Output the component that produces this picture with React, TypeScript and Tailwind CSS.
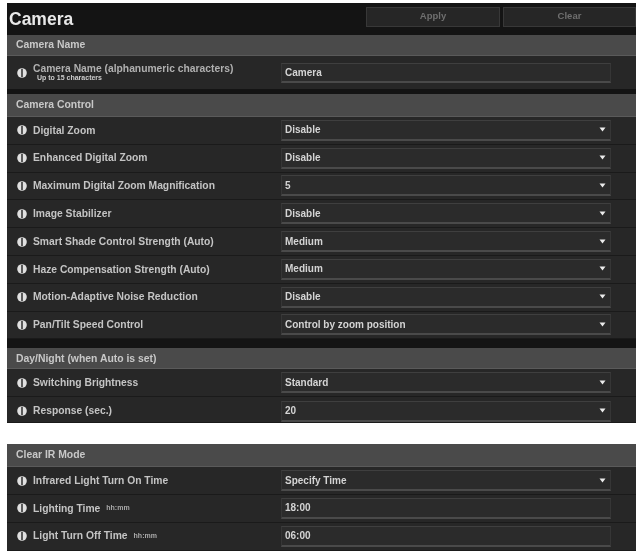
import React from "react";

function Info() {
  return (
    <svg width="10" height="10" viewBox="0 0 10 10" className="shrink-0">
      <circle cx="5" cy="5" r="4.8" fill="#e0e0e0" />
      <rect x="4.3" y="1" width="1.4" height="8" fill="#222" />
    </svg>
  );
}

function Section({ title, className = "" }: { title: string; className?: string }) {
  return (
    <div className={"flex h-[21px] items-center border-b border-[#5a5a5a] bg-[#4a4a4a] pl-[9px] text-[10.4px] font-bold text-[#c8c8c8] " + className}>
      {title}
    </div>
  );
}

function Row({
  label,
  note,
  value,
  select,
  h = "h-[27.8px]",
}: {
  label: string;
  note?: string;
  value: string;
  select?: boolean;
  h?: string;
}) {
  return (
    <div className={"flex items-center border-b border-[#1a1a1a] bg-[#272727] " + h}>
      <div className="flex w-[274px] shrink-0 items-center gap-[6px] pl-[10px]">
        <Info />
        <span className="text-[10.3px] font-bold text-[#c4c4c4]">{label}</span>
        {note && <span className="text-[7px] font-bold text-[#aaa]">{note}</span>}
      </div>
      <div className="flex h-[21px] w-[330px] items-center justify-between border-x border-t border-b-2 border-x-[#363636] border-t-[#3f3f3f] border-b-[#4a4a4a] bg-[#2b2b2b] px-[3px] text-[10px] font-bold text-[#d4d4d4]">
        <span>{value}</span>
        {select && (
          <svg width="7" height="5" viewBox="0 0 7 5" className="mr-[1px]">
            <path d="M0.5 0.5 H6.5 L3.5 4.5 Z" fill="#ececec" />
          </svg>
        )}
      </div>
    </div>
  );
}

export default function App() {
  return (
    <div className="h-[553px] w-[637px] overflow-hidden bg-white pl-[7px] pt-[3px] font-['Liberation_Sans',sans-serif] blur-[0.6px]">
      <div className="w-[629px] bg-[#141414]">
        <div className="flex h-[32px] items-center justify-between">
          <span className="pl-[2px] text-[17.5px] font-bold text-[#e8e8e8]">Camera</span>
          <div className="flex gap-[3px] pb-[6px] pt-[1px]">
            <div className="flex h-[20px] w-[134px] items-center justify-center border border-[#383838] bg-[#262626] text-[9.5px] font-bold text-[#6f6f6f]">Apply</div>
            <div className="flex h-[20px] w-[133px] items-center justify-center border border-[#383838] bg-[#262626] text-[9.5px] font-bold text-[#6f6f6f]">Clear</div>
          </div>
        </div>
        <Section title="Camera Name" />
        <div className="flex h-[33px] items-center bg-[#272727]">
          <div className="flex w-[274px] shrink-0 items-center gap-[6px] pl-[10px]">
            <Info />
            <div className="flex flex-col pb-[1px]">
              <span className="text-[10.3px] leading-[11px] font-bold text-[#b0b0b0]">Camera Name (alphanumeric characters)</span>
              <span className="pl-[4px] text-[7px] leading-[8px] font-bold text-[#ccc]">Up to 15 characters</span>
            </div>
          </div>
          <div className="flex h-[20px] w-[330px] items-center border-x border-t border-b-2 border-x-[#363636] border-t-[#3f3f3f] border-b-[#4a4a4a] bg-[#2b2b2b] px-[3px] text-[10px] font-bold text-[#d4d4d4]">Camera</div>
        </div>
        <div className="h-[5px]" />
        <Section title="Camera Control" className="h-[23px]" />
        <Row label="Digital Zoom" value="Disable" select />
        <Row label="Enhanced Digital Zoom" value="Disable" select />
        <Row label="Maximum Digital Zoom Magnification" value="5" select />
        <Row label="Image Stabilizer" value="Disable" select />
        <Row label="Smart Shade Control Strength (Auto)" value="Medium" select />
        <Row label="Haze Compensation Strength (Auto)" value="Medium" select />
        <Row label="Motion-Adaptive Noise Reduction" value="Disable" select />
        <Row label="Pan/Tilt Speed Control" value="Control by zoom position" select />
        <div className="h-[9px]" />
        <Section title="Day/Night (when Auto is set)" />
        <Row label="Switching Brightness" value="Standard" select />
        <Row label="Response (sec.)" value="20" select h="h-[26px] pt-[3px]" />
      </div>
      <div className="mt-[21px] w-[629px] bg-[#141414]">
        <Section title="Clear IR Mode" className="h-[23px]" />
        <Row label="Infrared Light Turn On Time" value="Specify Time" select />
        <Row label="Lighting Time" note="hh:mm" value="18:00" />
        <Row label="Light Turn Off Time" note="hh:mm" value="06:00" />
      </div>
    </div>
  );
}
